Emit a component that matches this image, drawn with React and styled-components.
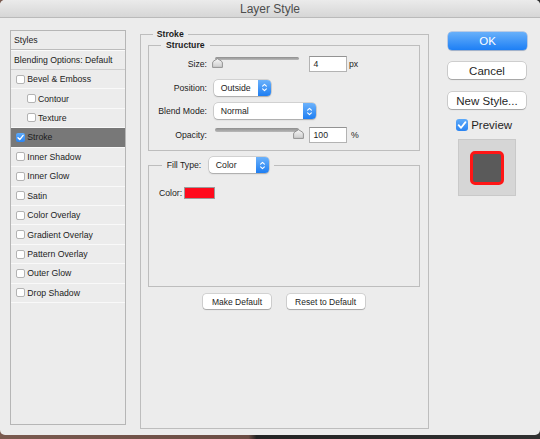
import React from "react";
import styled, { createGlobalStyle } from "styled-components";

const GlobalStyle = createGlobalStyle`
  html, body { margin: 0; padding: 0; }
  body {
    width: 540px;
    height: 439px;
    overflow: hidden;
    background: linear-gradient(90deg, #7a5a4f 0%, #6b4d44 46%, #242424 47.5%, #303030 100%);
    font-family: "Liberation Sans", Arial, sans-serif;
  }
`;

const Window = styled.div`
  width: 540px;
  height: 435px;
  background: #ececec;
  border-radius: 5px;
  overflow: hidden;
  display: flex;
  flex-direction: column;
`;

const TitleBar = styled.div`
  height: 17px;
  flex: none;
  border-bottom: 1px solid #bababa;
  background: linear-gradient(#ebebeb, #d6d6d6);
  display: flex;
  align-items: center;
  justify-content: center;
  font-size: 12px;
  color: #4d4d4d;
`;

const Content = styled.div`
  display: flex;
  align-items: flex-start;
  padding: 10.5px 0 0 10px;
`;

/* ---------- left list ---------- */
const LayerList = styled.div`
  width: 116px;
  height: 395px;
  margin-top: 1.5px;
  box-sizing: border-box;
  border: 1px solid #b6b6b6;
  display: flex;
  flex-direction: column;
  background: #ececec;
`;

const LayerRow = styled.div`
  height: 19.45px;
  flex: none;
  box-sizing: border-box;
  display: flex;
  align-items: center;
  padding-left: ${(p) => (p.$header ? 3 : p.$indent ? 15.7 : 5)}px;
  border-bottom: 1px solid ${(p) => p.$sep || "#f9f9f9"};
  box-shadow: ${(p) => (p.$double ? "0 1px 0 #fbfbfb" : "none")};
  background: ${(p) => (p.$selected ? "#787878" : "transparent")};
  font-size: 8.7px;
  color: #1c1c1c;
  white-space: nowrap;
`;

const Box = styled.span`
  width: ${(p) => p.$size || 9}px;
  height: ${(p) => p.$size || 9}px;
  flex: none;
  box-sizing: border-box;
  border-radius: ${(p) => (p.$size ? 3 : 2)}px;
  margin-right: ${(p) => p.$gap || 2.3}px;
  background: ${(p) => (p.$checked ? "linear-gradient(#5eaaf9, #2a84f2)" : "#fff")};
  border: ${(p) => (p.$checked ? "none" : "1px solid #b3b3b3")};
  display: flex;
  align-items: center;
  justify-content: center;
`;

const Check = ({ s = 9 }) => (
  <svg width={s} height={s} viewBox="0 0 10 10">
    <path d="M2.2 5.2 L4.2 7.3 L7.9 2.6" fill="none" stroke="#fff" strokeWidth="1.5" strokeLinecap="round" strokeLinejoin="round" />
  </svg>
);

const CheckBox = ({ checked, size, gap }) => (
  <Box $checked={checked} $size={size} $gap={gap}>
    {checked && <Check s={size || 9} />}
  </Box>
);

/* ---------- fieldsets ---------- */
const Group = styled.fieldset`
  margin: 0;
  min-width: 0;
  box-sizing: border-box;
  border: 1px solid #bdbdbd;
  padding: 0;
`;

const OuterGroup = styled(Group)`
  width: 289px;
  height: 400px;
  margin-left: 14px;
  padding: 0 8px 0 7px;
`;

const StructureGroup = styled(Group)`
  height: 111px;
`;

const FillGroup = styled(Group)`
  height: 129.5px;
  margin-top: 6.5px;
`;

const Legend = styled.legend`
  margin-left: ${(p) => p.$offset}px;
  padding: 0 ${(p) => p.$pad}px;
  font-size: 8.7px;
  line-height: 11px;
  font-weight: ${(p) => (p.$bold ? 700 : 400)};
  color: #1c1c1c;
  display: flex;
  align-items: center;
  gap: 7.5px;
`;

const FormGrid = styled.div`
  display: grid;
  grid-template-columns: 58px auto;
  column-gap: 5px;
  grid-auto-rows: 23.7px;
  align-items: center;
  padding-top: 1.65px;
`;

const Label = styled.span`
  font-size: 8.7px;
  color: #1c1c1c;
  text-align: right;
  white-space: nowrap;
`;

const ControlRow = styled.div`
  display: flex;
  align-items: center;
`;

const SliderWrap = styled.div`
  width: 91px;
  height: 14px;
  display: flex;
  flex-direction: column;
`;

const Track = styled.div`
  height: 3.5px;
  width: 84px;
  margin-left: 3px;
  box-sizing: border-box;
  border-radius: 2px;
  background: linear-gradient(#8e8e8e, #b9b9b9);
  flex: none;
`;

const ThumbSvg = styled.svg`
  display: block;
  margin-top: -2.5px;
  flex: none;
`;

const Slider = ({ value, max }) => (
  <SliderWrap>
    <Track />
    <ThumbSvg width="11" height="10" viewBox="0 0 11 10" style={{ marginLeft: (value / max) * 81 }}>
      <defs>
        <linearGradient id="tg" x1="0" y1="0" x2="0" y2="1">
          <stop offset="0" stopColor="#f7f7f7" />
          <stop offset="1" stopColor="#cdcdcd" />
        </linearGradient>
      </defs>
      <path d="M0.6 9.4 V5 Q0.6 3.6 2 2.8 L5.5 0.7 L9 2.8 Q10.4 3.6 10.4 5 V9.4 Z" fill="url(#tg)" stroke="#8a8a8a" strokeWidth="0.9" />
    </ThumbSvg>
  </SliderWrap>
);

const Field = styled.div`
  width: 38px;
  height: 15.7px;
  box-sizing: border-box;
  background: #fff;
  border: 1px solid #b3b3b3;
  border-top-color: #939393;
  font-size: 8.7px;
  color: #1c1c1c;
  padding-left: 3.5px;
  display: flex;
  align-items: center;
  margin-left: 6px;
`;

const Unit = styled.span`
  font-size: 8.7px;
  color: #1c1c1c;
  margin-left: ${(p) => p.$gap}px;
`;

const SelectBox = styled.div`
  width: ${(p) => p.$w}px;
  height: 16px;
  box-sizing: border-box;
  margin-left: ${(p) => p.$ml || 0}px;
  display: flex;
  align-items: center;
  background: #fff;
  border-radius: 4px;
  box-shadow: 0 0 0 0.5px rgba(0, 0, 0, 0.22), 0 1px 1.5px rgba(0, 0, 0, 0.2);
  font-size: 8.7px;
  font-weight: 400;
  color: #1c1c1c;
  overflow: hidden;
`;

const SelectText = styled.span`
  flex: 1;
  padding-left: 7px;
`;

const Stepper = styled.span`
  width: 13px;
  height: 100%;
  flex: none;
  background: linear-gradient(#6cb2fb, #1e7ef2);
  display: flex;
  align-items: center;
  justify-content: center;
`;

const Select = ({ w, ml, children }) => (
  <SelectBox $w={w} $ml={ml}>
    <SelectText>{children}</SelectText>
    <Stepper>
      <svg width="7" height="11" viewBox="0 0 7 11">
        <path d="M1.6 4.2 L3.5 2.3 L5.4 4.2 M1.6 6.8 L3.5 8.7 L5.4 6.8" fill="none" stroke="#fff" strokeWidth="1.1" strokeLinecap="round" strokeLinejoin="round" />
      </svg>
    </Stepper>
  </SelectBox>
);

const ColorRow = styled.div`
  display: flex;
  align-items: center;
  gap: 2px;
  margin-top: 13.7px;
  padding-left: 10px;
`;

const Swatch = styled.div`
  width: 31px;
  height: 12.5px;
  box-sizing: border-box;
  background: #ff0a1c;
  border: 1px solid #9a9a9a;
`;

const ButtonRow = styled.div`
  display: flex;
  justify-content: center;
  gap: 16px;
  margin-top: 7.8px;
`;

const SmallButton = styled.div`
  height: 15px;
  padding: 0 8.5px;
  box-sizing: border-box;
  display: flex;
  align-items: center;
  background: #fff;
  border-radius: 3px;
  box-shadow: 0 0 0 0.5px rgba(0, 0, 0, 0.22), 0 1px 1px rgba(0, 0, 0, 0.2);
  font-size: 8.5px;
  color: #1c1c1c;
  white-space: nowrap;
`;

/* ---------- right column ---------- */
const SideColumn = styled.div`
  width: 79px;
  margin-left: 19px;
  margin-top: 3.5px;
  display: flex;
  flex-direction: column;
`;

const DialogButton = styled.div`
  height: ${(p) => (p.$primary ? 18 : 17)}px;
  width: ${(p) => (p.$primary ? 79 : 78)}px;
  margin-bottom: ${(p) => p.$mb || 0}px;
  box-sizing: border-box;
  border-radius: 4px;
  display: flex;
  align-items: center;
  justify-content: center;
  font-size: 11.5px;
  color: ${(p) => (p.$primary ? "#fff" : "#1f1f1f")};
  background: ${(p) => (p.$primary ? "linear-gradient(#68b0fa, #1d7ff5)" : "#fff")};
  box-shadow: ${(p) =>
    p.$primary
      ? "0 0 0 0.5px rgba(20,90,200,0.45), 0 1px 1px rgba(0,0,0,0.15)"
      : "0 0 0 0.5px rgba(0,0,0,0.25), 0 1px 1px rgba(0,0,0,0.2)"};
  white-space: nowrap;
`;

const PreviewToggle = styled.div`
  display: flex;
  align-items: center;
  margin-top: 10px;
  margin-left: 7.7px;
  font-size: 11.5px;
  color: #1f1f1f;
`;

const PreviewBox = styled.div`
  width: 58px;
  height: 57px;
  margin-top: 8px;
  margin-left: 10px;
  box-sizing: border-box;
  background: #d6d6d6;
  border: 1px solid #c9c9c9;
  display: flex;
  align-items: center;
  justify-content: center;
`;

const PreviewSquare = styled.div`
  width: 34px;
  height: 34px;
  box-sizing: border-box;
  border: 3px solid #ff1616;
  border-radius: 5px;
  background: #5a5a5a;
`;

const layers = [
  { name: "Bevel & Emboss" },
  { name: "Contour", indent: true },
  { name: "Texture", indent: true },
  { name: "Stroke", checked: true, selected: true },
  { name: "Inner Shadow" },
  { name: "Inner Glow" },
  { name: "Satin" },
  { name: "Color Overlay" },
  { name: "Gradient Overlay" },
  { name: "Pattern Overlay" },
  { name: "Outer Glow" },
  { name: "Drop Shadow" },
];

export default function App() {
  return (
    <>
      <GlobalStyle />
      <Window>
        <TitleBar>Layer Style</TitleBar>
        <Content>
          <LayerList>
            <LayerRow $header $sep="#bcbcbc" $double>Styles</LayerRow>
            <LayerRow $header $sep="#cfcfcf">Blending Options: Default</LayerRow>
            {layers.map((l) => (
              <LayerRow key={l.name} $indent={l.indent} $selected={l.selected}>
                <CheckBox checked={l.checked} />
                {l.name}
              </LayerRow>
            ))}
          </LayerList>

          <OuterGroup>
            <Legend $offset={4.7} $pad={4} $bold>Stroke</Legend>
            <StructureGroup>
              <Legend $offset={12} $pad={5} $bold>Structure</Legend>
              <FormGrid>
                <Label>Size:</Label>
                <ControlRow>
                  <Slider value={1} max={250} />
                  <Field>4</Field>
                  <Unit $gap={2}>px</Unit>
                </ControlRow>
                <Label>Position:</Label>
                <ControlRow>
                  <Select w={57.3} ml={1.7}>Outside</Select>
                </ControlRow>
                <Label>Blend Mode:</Label>
                <ControlRow>
                  <Select w={102} ml={1.7}>Normal</Select>
                </ControlRow>
                <Label>Opacity:</Label>
                <ControlRow>
                  <Slider value={100} max={100} />
                  <Field>100</Field>
                  <Unit $gap={4}>%</Unit>
                </ControlRow>
              </FormGrid>
            </StructureGroup>

            <FillGroup>
              <Legend $offset={12.7} $pad={5}>
                Fill Type:
                <Select w={60}>Color</Select>
              </Legend>
              <ColorRow>
                <Label>Color:</Label>
                <Swatch />
              </ColorRow>
            </FillGroup>

            <ButtonRow>
              <SmallButton>Make Default</SmallButton>
              <SmallButton>Reset to Default</SmallButton>
            </ButtonRow>
          </OuterGroup>

          <SideColumn>
            <DialogButton $primary $mb={12}>OK</DialogButton>
            <DialogButton $mb={13}>Cancel</DialogButton>
            <DialogButton>New Style...</DialogButton>
            <PreviewToggle>
              <CheckBox checked size={12} gap={3.5} />
              Preview
            </PreviewToggle>
            <PreviewBox>
              <PreviewSquare />
            </PreviewBox>
          </SideColumn>
        </Content>
      </Window>
    </>
  );
}
